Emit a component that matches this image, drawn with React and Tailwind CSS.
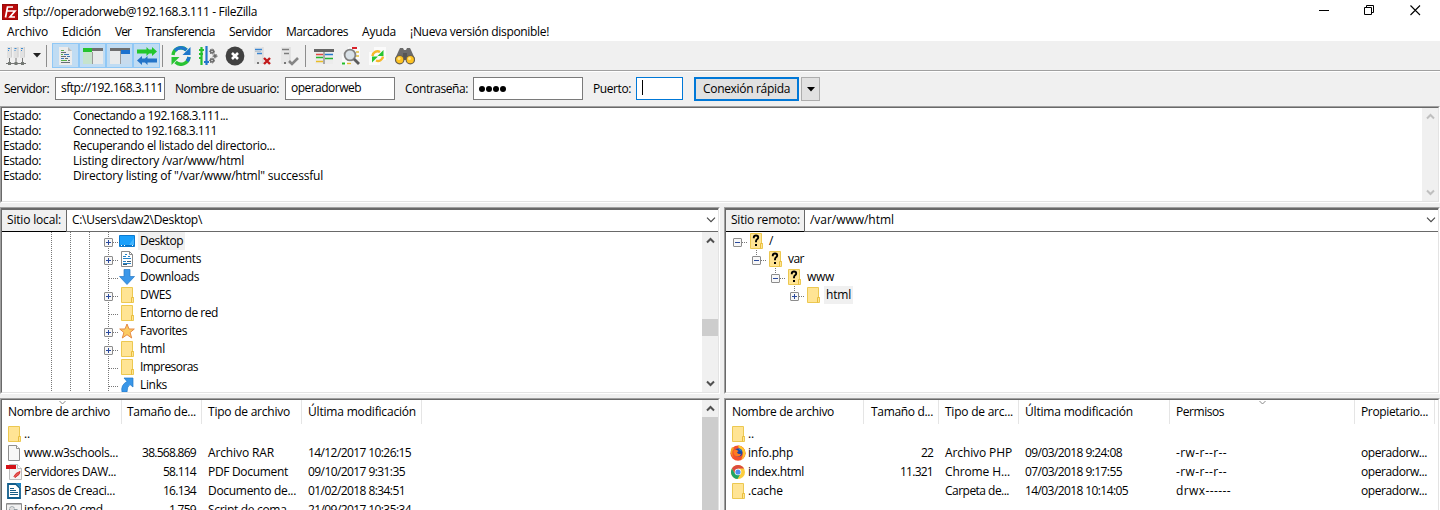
import { useLayoutEffect, useRef } from "react";

/* Text run whose tracking is adjusted so that it takes up `w` pixels. */
function T({ w, children, className = "" }) {
  const ref = useRef(null);
  useLayoutEffect(() => {
    const el = ref.current;
    el.style.letterSpacing = "0px";
    const natural = el.getBoundingClientRect().width;
    el.style.letterSpacing = (w - natural) / children.length + "px";
  }, [w, children]);
  return (
    <span ref={ref} className={"inline-block shrink-0 whitespace-pre " + className}>
      {children}
    </span>
  );
}

const Svg = ({ w = 20, h = 20, children, className = "" }) => (
  <svg width={w} height={h} viewBox={`0 0 ${w} ${h}`} className={"block shrink-0 " + className}>
    {children}
  </svg>
);

/* ---------- file and tree icons (16x16) ---------- */
const FolderIcon = ({ unknown }) => (
  <Svg w={16} h={16}>
    <path d="M2.500.5h11v10h1v5h-12z" fill="#ffe494" stroke="#ecc851" />
    <path d="M12.500 15.500v-5h2" fill="none" stroke="#e8bd3c" />
    {unknown && (
      <>
        <path d="M5.800 5.200V4.200Q5.800 2.500 8 2.500t2.200 1.900q0 1.200-1.100 1.900T8 8.500v.8" fill="none" stroke="#000" strokeWidth="1.900" />
        <path d="M7 11h2v2H7z" />
      </>
    )}
  </Svg>
);
const DesktopIcon = () => (
  <Svg w={16} h={16}>
    <path d="M.5 2.500h15v11H.5z" fill="#1aa0fb" stroke="#0b7ad0" />
    <path d="M10 12 15 5v7z" fill="#41b5ff" />
    <path d="M1 12.500h14" stroke="#0873c5" />
    <path d="M2 12.500h1m2 0h1m7 0h1" stroke="#fff" />
  </Svg>
);
const DocumentsIcon = () => (
  <Svg w={16} h={16}>
    <path d="M2.500.5h8l3 3v12h-11z" fill="#fff" stroke="#8b8b8b" />
    <path d="M10.500.5v3h3" fill="none" stroke="#8b8b8b" />
    <path d="M6 3.500h2M4 5.500h3M9 5.500h2M4 7.500h8M4 10.500h3M4 12.500h8" stroke="#2382c8" />
    <path d="M8 10h4v1H8zM4 13h4v1H4z" fill="#38596f" />
  </Svg>
);
const DownloadsIcon = () => (
  <Svg w={16} h={16}>
    <path d="M5 .5h6v7h4.500L8 15.500.5 7.500H5z" fill="#3b97e9" stroke="#2478c5" strokeWidth=".7" />
  </Svg>
);
const StarIcon = () => (
  <Svg w={16} h={16}>
    <path d="m8 1 2 5h5.300l-4.200 3.500 1.600 5.500L8 11.700 3.300 15l1.600-5.500L.7 6H6z" fill="#fbcb62" stroke="#e58a45" />
  </Svg>
);
const LinksIcon = () => (
  <Svg w={16} h={16}>
    <path d="M5 1h9v9l-3-2.500Q8 9.500 8 15H3Q1.500 8 8 4.500z" fill="#3996e8" stroke="#2079c9" strokeWidth=".7" />
  </Svg>
);
const BlankIcon = () => (
  <Svg w={16} h={16}>
    <path d="M2.500.5h8l3 3v12h-11z" fill="#f7f7f7" stroke="#8f8f8f" />
    <path d="M10.500.5v3h3" fill="#fff" stroke="#8f8f8f" />
  </Svg>
);
const PdfIcon = () => (
  <Svg w={16} h={16}>
    <path d="M3.500.5h8l4 4v11h-12z" fill="#f3f3f3" stroke="#bdbdbd" />
    <path d="M11.500.5v4h4" fill="#fff" stroke="#bdbdbd" />
    <path d="M0 1h10v4H0z" fill="#d31217" />
    <path d="m8 12.500 2-3 4-2-1 3-4 3z" fill="#e45a55" stroke="#d8302f" />
  </Svg>
);
const WriterIcon = () => (
  <Svg w={16} h={16}>
    <path d="M2 1h8l4 4v10H2z" fill="#fff" stroke="#125e8c" strokeWidth="1.800" />
    <path d="M10 0h5v5z" fill="#1c83c0" />
    <path d="M4 5.500h4M4 7.500h6M4 9.500h8M4 11.500h8" stroke="#185d86" />
  </Svg>
);
const CmdIcon = () => (
  <Svg w={16} h={16}>
    <path d="M.5 1.500h15v14H.5z" fill="#f1f1f1" stroke="#8b8b8b" />
    <path d="M1 2.500h14" stroke="#bbb" />
    <circle cx="6" cy="7" r="2.500" fill="#ddd" stroke="#849097" strokeDasharray="2 1" />
    <circle cx="10" cy="10" r="2.500" fill="#ddd" stroke="#849097" />
  </Svg>
);
const FirefoxIcon = () => (
  <Svg w={16} h={16}>
    <circle cx="8" cy="8.200" r="7.600" fill="#f4502c" />
    <path d="M8 0q7 2 7.500 8-.5 5-4.500 7Q15 9 10.500 4 8 3 8 0" fill="#ffc62c" />
    <path d="M1 4.500 2 2l2 1.500Q.5 8 4 13 0 10 1 4.500" fill="#f2a321" />
    <circle cx="8.400" cy="7.500" r="4" fill="#1748a8" />
    <path d="M8 3q3 .5 4 3.500L9.500 5z" fill="#2d99db" />
    <path d="M3.500 5.500 6 4.500 8.500 6 7 7.500q1.500 2.500 4.500 1-2 4-6 2.500Q3 9 3.500 5.500" fill="#ff7a22" />
  </Svg>
);
const ChromeIcon = () => (
  <Svg w={16} h={16}>
    <circle cx="8" cy="8" r="7" fill="#fccd3d" />
    <path d="M5 9.700 1.900 4.500A7 7 0 0 1 14.100 4.500H8z" fill="#dc4b3e" />
    <path d="M1.900 4.500A7 7 0 0 0 7.500 15l3-5.200H5z" fill="#21a567" />
    <circle cx="8" cy="8" r="3.300" fill="#fff" />
    <circle cx="8" cy="8" r="2.600" fill="#4f8df0" />
  </Svg>
);

/* ---------- toolbar icons ---------- */
const SiteManagerIcon = () => (
  <Svg>
    <path d="M1 1h5v11H1zM7.500 1h5v11h-5zM14 1h5v11h-5z" fill="#e1e1e1" />
    <path d="M2 2.500h2m4.500 0h2m4.500 0h2M2 4.500h1m5.500 0h1m5.500 0h1" stroke="#3d8bd1" />
    <path d="M5.500 1v10M12 1v10M18.500 1v10" stroke="#cfcfcf" />
    <path d="M3.500 12v4M10 12v4M16.500 12v4M0 17.500h20" stroke="#777" />
    <path d="M2 16h3v3H2zM8.500 16h3v3h-3zM15 16h3v3h-3z" fill="#747974" />
  </Svg>
);
const LogIcon = () => (
  <Svg>
    <path d="M3 1h9l4 4v14H3z" fill="#ececec" />
    <path d="m12 1 4 4h-4z" fill="#bbb" />
    <path d="M5 4.500h3M5 8.500h2M5 14.500h6" stroke="#57af49" />
    <path d="M8 8.500h5M5 12.500h3M11 10.500h3" stroke="#3e79ba" />
    <path d="M5 6.500h5M5 10.500h5M9 12.500h3M5 16.500h9M12 14.500h2" stroke="#676e75" />
  </Svg>
);
const LocalTreeIcon = () => (
  <Svg>
    <path d="M0 2h20v16H0z" fill="#e8eaeb" />
    <path d="M0 2h20v3H0z" fill="#6e6e6e" />
    <path d="M0 2h9v4H0z" fill="#24c32d" />
    <path d="M0 6h9v12H0z" fill="#c6e3cc" />
    <path d="M9.500 6v12" stroke="#999" />
  </Svg>
);
const RemoteTreeIcon = () => (
  <Svg>
    <path d="M0 2h20v16H0z" fill="#e8eaeb" />
    <path d="M0 2h20v3H0z" fill="#6e6e6e" />
    <path d="M11 4h9v4h-9z" fill="#1b71ce" />
    <path d="M11 8h9v10h-9z" fill="#c7dbed" />
    <path d="M10.500 5v13" stroke="#999" />
  </Svg>
);
const QueueIcon = () => (
  <Svg>
    <path d="M0 3.500h9.500V1l2.500 2.500h3V1l5 4.500-5 4.500V7.500h-3L9.500 10V7.500H0z" fill="#23c62c" />
    <path d="M20 12.500h-9.500V10L8 12.500H5V10l-5 4.500L5 19v-2.500h3l2.500 2.500v-2.500H20z" fill="#2474c8" />
  </Svg>
);
const RefreshIcon = () => (
  <Svg>
    <path d="M2 9A8 8 0 0 1 15.500 4" fill="none" stroke="#29c433" strokeWidth="3.400" />
    <path d="M4 4.500A8 8 0 0 1 15.500 4" fill="none" stroke="#1e77cb" strokeWidth="3.400" />
    <path d="M19.500 1v8h-8z" fill="#1e77cb" />
    <path d="M18 11A8 8 0 0 1 4.500 16" fill="none" stroke="#29c433" strokeWidth="3.400" />
    <path d="M18 11A8 8 0 0 1 16 15.200" fill="none" stroke="#1e77cb" strokeWidth="3.400" />
    <path d="M.5 19v-8h8z" fill="#29c433" />
  </Svg>
);
const Gear = ({ x, y, r }) => (
  <>
    <circle cx={x} cy={y} r={r} fill="none" stroke="#686868" strokeWidth="1.500" />
    <circle cx={x} cy={y} r={r + 1} fill="none" stroke="#686868" strokeWidth="1" strokeDasharray="1.200 1.200" />
  </>
);
const ProcessIcon = () => (
  <Svg>
    <path d="M3.500 1v18M1 4h5M1 8h4M1 12h3" stroke="#26c12e" strokeWidth="2.200" />
    <path d="M8.500 0v19M6 16h5" stroke="#2376cc" strokeWidth="2.200" />
    <Gear x={14} y={5.500} r={1.500} />
    <Gear x={17} y={10} r={1} />
    <Gear x={14} y={14.500} r={1.500} />
  </Svg>
);
const CancelIcon = () => (
  <Svg>
    <circle cx="10" cy="10" r="9.400" fill="#414141" />
    <path d="m7 7 6 6m0-6-6 6" stroke="#fff" strokeWidth="2.600" />
  </Svg>
);
const DisconnectIcon = () => (
  <Svg>
    <path d="M2 1h9v17H2z" fill="#e7e7e7" />
    <path d="M11 1v17" stroke="#d3d3d3" />
    <path d="M3 3.500h7M5 7.500h5" stroke="#3a85d0" strokeWidth="1.500" />
    <path d="M3 5.500h6" stroke="#b9c5d0" />
    <path d="M5 16h2v2H5z" fill="#777" />
    <path d="m12 12 6 6m0-6-6 6" stroke="#c2191b" strokeWidth="2.400" />
  </Svg>
);
const ReconnectIcon = () => (
  <Svg>
    <path d="M2 1h9v17H2z" fill="#e7e7e7" />
    <path d="M11 1v17" stroke="#d3d3d3" />
    <path d="M3 3.500h7M5 7.500h5" stroke="#7c7c7c" strokeWidth="1.500" />
    <path d="M5 16h2v2H5z" fill="#777" />
    <path d="m10 15 3 3 6-6" fill="none" stroke="#858585" strokeWidth="2.600" />
  </Svg>
);
const FilterIcon = () => (
  <Svg>
    <path d="M1 4h18v14H1z" fill="#ececec" />
    <path d="M0 3h20v3H0z" fill="#666" />
    <path d="M2 8.500h7" stroke="#e24a44" strokeWidth="1.500" />
    <path d="M2 11.500h7" stroke="#25b82d" strokeWidth="1.500" />
    <path d="M2 15.500h7" stroke="#e9bd27" strokeWidth="1.500" />
    <path d="M11 12.500h8" stroke="#24b331" strokeWidth="1.500" />
    <path d="M11 8.500h8" stroke="#2679cd" strokeWidth="1.500" />
    <path d="M10 5v13" stroke="#666" />
  </Svg>
);
const CompareIcon = () => (
  <Svg>
    <path d="M7 1h12v12H7zM1 8h9v11H1z" fill="#fafafa" />
    <path d="M11 2h5" stroke="#d9232b" strokeWidth="2" />
    <path d="M15 6h3M15 10h3" stroke="#e1bf3a" strokeWidth="1.500" />
    <path d="M1 17.500h3" stroke="#22bd2b" strokeWidth="2" />
    <path d="M6 17.500h4" stroke="#e4bb32" strokeWidth="1.500" />
    <circle cx="9" cy="9" r="5.400" fill="#d9e1e7" stroke="#818181" strokeWidth="1.800" />
    <path d="m13 13 5 5" stroke="#5b5b5b" strokeWidth="2.800" />
  </Svg>
);
const SyncIcon = () => (
  <Svg>
    <path d="M6 1h12v13H6zM1 6h11v13H1z" fill="#fbfbfb" />
    <path d="M4.500 10A5 5 0 0 1 12 6" fill="none" stroke="#f5b92b" strokeWidth="2.400" />
    <path d="M15.500 4v6H9.500z" fill="#28c532" />
    <path d="M15 10.500a5 5 0 0 1-7 4" fill="none" stroke="#f5b92b" strokeWidth="2.400" />
    <path d="M4 16.500v-6h6z" fill="#28c532" />
  </Svg>
);
const FindIcon = () => (
  <Svg>
    <path d="M4 4 5 2h3l1 2h2l1-2h3l1 2 4 9H0z" fill="#6b6b6b" />
    <path d="M8 7h4v7H8z" fill="#555" />
    <circle cx="4.700" cy="13.700" r="4.200" fill="#ffc321" stroke="#69604e" strokeWidth="1.200" />
    <circle cx="15.300" cy="13.700" r="4.200" fill="#ffc321" stroke="#69604e" strokeWidth="1.200" />
    <circle cx="4" cy="12.500" r="1.500" fill="#ffe58a" />
    <circle cx="14.500" cy="12.500" r="1.500" fill="#ffe58a" />
  </Svg>
);

const ToolButton = ({ children }) => (
  <div className="flex h-full w-[27px] items-center justify-center">{children}</div>
);
const Pressed = ({ children }) => (
  <div className="flex h-[25px] w-[27px] items-center justify-center border border-[#90c8f6] bg-[#c0dcf3]">{children}</div>
);
const Sep = () => <div className="h-[22px] w-px bg-[#8d8d8d]" />;

function TitleBar() {
  return (
    <div className="flex h-[23px] shrink-0 items-center pl-[2px]">
      <Svg w={16} h={17}>
        <path d="M0 1h16v16H0z" fill="#b80a0a" />
        <path d="M.5 1.500h15v15H.5z" fill="none" stroke="#7f0909" strokeDasharray="1 1" />
        <path d="M3.500 14.500 5.500 4H11M4.500 8h4.500M8.500 8H13l-5 6h5" fill="none" stroke="#fff" strokeWidth="1.700" />
      </Svg>
      <T w={234} className="ml-[5px]">sftp://operadorweb@192.168.3.111 - FileZilla</T>
      <div className="ml-auto flex h-full items-center pb-[2px] pr-[19px]">
        <Svg w={11} h={11} className="mr-[34px]"><path d="M0 5.500h10" stroke="#000" /></Svg>
        <Svg w={11} h={11} className="mr-[35px]"><path d="M.5 2.500h7v7h-7zM2.500 2V.5h7v7H8" fill="none" stroke="#000" /></Svg>
        <Svg w={11} h={11}><path d="m.5.5 9.500 9.500m0-9.500L.5 10" stroke="#000" strokeWidth="1.100" /></Svg>
      </div>
    </div>
  );
}

function MenuBar() {
  return (
    <div className="flex h-[18px] shrink-0 items-center pl-[7px]">
      <T w={41} className="mr-[14px]">Archivo</T>
      <T w={39} className="mr-[14px]">Edición</T>
      <T w={16} className="mr-[14px]">Ver</T>
      <T w={70} className="mr-[14px]">Transferencia</T>
      <T w={43} className="mr-[14px]">Servidor</T>
      <T w={62} className="mr-[14px]">Marcadores</T>
      <T w={34} className="mr-[14px]">Ayuda</T>
      <T w={139}>¡Nueva versión disponible!</T>
    </div>
  );
}

function ToolBar() {
  return (
    <div className="flex h-[29px] shrink-0 items-center bg-[#f0f0f0] pl-[6px]">
      <SiteManagerIcon />
      <Svg w={8} h={5} className="ml-[7px]"><path d="M0 0h8L4 4.500z" fill="#222" /></Svg>
      <div className="ml-[5px] mr-[5px]"><Sep /></div>
      <Pressed><LogIcon /></Pressed>
      <Pressed><LocalTreeIcon /></Pressed>
      <Pressed><RemoteTreeIcon /></Pressed>
      <Pressed><QueueIcon /></Pressed>
      <div className="ml-[2px] mr-[4px]"><Sep /></div>
      <ToolButton><RefreshIcon /></ToolButton>
      <ToolButton><ProcessIcon /></ToolButton>
      <ToolButton><CancelIcon /></ToolButton>
      <ToolButton><DisconnectIcon /></ToolButton>
      <ToolButton><ReconnectIcon /></ToolButton>
      <div className="ml-[3px] mr-[4px]"><Sep /></div>
      <ToolButton><FilterIcon /></ToolButton>
      <ToolButton><CompareIcon /></ToolButton>
      <ToolButton><SyncIcon /></ToolButton>
      <ToolButton><FindIcon /></ToolButton>
    </div>
  );
}

function QuickConnect() {
  const field = "flex h-[23px] items-center overflow-hidden border bg-white pl-[5px] ";
  return (
    <div className="flex h-[34px] shrink-0 items-start bg-[#f0f0f0] pl-1 pt-[5px]">
      <T w={45} className="mr-[6px] mt-[4px]">Servidor:</T>
      <div className={field + "w-[110px] border-[#7a7a7a] pb-px"}><T w={102}>sftp://192.168.3.111</T></div>
      <T w={104} className="ml-[10px] mr-[6px] mt-[4px]">Nombre de usuario:</T>
      <div className={field + "w-[110px] border-[#7a7a7a] pb-px"}><T w={70}>operadorweb</T></div>
      <T w={63} className="ml-[10px] mr-[5px] mt-[4px]">Contraseña:</T>
      <div className={field + "w-[110px] gap-px border-[#7a7a7a]"}>
        {[0, 1, 2, 3].map((i) => <div key={i} className="size-[6px] rounded-full bg-black" />)}
      </div>
      <T w={38} className="ml-[10px] mr-[5px] mt-[4px]">Puerto:</T>
      <div className={field + "w-[47px] border-[#0078d7]"}><div className="mb-[2px] h-[15px] w-px bg-black" /></div>
      <div className="ml-[11px] flex h-[24px] w-[105px] items-center border-2 border-[#0078d7] bg-[#e1e1e1] pl-[7px]">
        <T w={87}>Conexión rápida</T>
      </div>
      <div className="ml-[2px] flex h-[24px] w-[19px] items-center justify-center border border-[#adadad] bg-[#e1e1e1]">
        <Svg w={8} h={5}><path d="M0 0h8L4 4.500z" /></Svg>
      </div>
    </div>
  );
}

/* Sunken window edge: two dark lines top/left, two light lines bottom/right. */
const Sunken = ({ className = "", children }) => (
  <div className={"flex shrink-0 border border-b-white border-l-[#a0a0a0] border-r-white border-t-[#a0a0a0] " + className}>
    <div className="flex min-w-0 flex-1 flex-col border border-b-[#e3e3e3] border-l-[#696969] border-r-[#e3e3e3] border-t-[#696969] bg-white">
      {children}
    </div>
  </div>
);

const Chevron = ({ up, color = "#505050", className = "" }) => (
  <Svg w={9} h={7} className={className}>
    <path d={up ? "M1 5.500 4.500 2 8 5.500" : "M1 1.500 4.500 5 8 1.500"} fill="none" stroke={color} strokeWidth="2" />
  </Svg>
);

const LOG = [
  ["Conectando a 192.168.3.111...", 155],
  ["Connected to 192.168.3.111", 144],
  ["Recuperando el listado del directorio...", 202],
  ["Listing directory /var/www/html", 171],
  ['Directory listing of "/var/www/html" successful', 250],
];

function LogPane() {
  return (
    <Sunken className="h-[97px]">
      <div className="flex min-h-0 flex-1">
        <div className="flex-1 pl-px">
          {LOG.map(([text, w]) => (
            <div key={text} className="flex h-[15px] items-center">
              <div className="w-[70px]"><T w={38}>Estado:</T></div>
              <T w={w}>{text}</T>
            </div>
          ))}
        </div>
        <div className="flex w-4 flex-col items-center justify-between bg-[#f0f0f0] py-[5px]">
          <Chevron up color="#bfbfbf" />
          <Chevron color="#bfbfbf" />
        </div>
      </div>
    </Sunken>
  );
}

function Address({ label, labelW, path, pathW, boxClass }) {
  return (
    <div className="flex h-[23px] shrink-0 border-t border-[#696969]">
      <div className={"flex items-center border-b border-black bg-[#f0f0f0] pb-px pl-[5px] " + boxClass}>
        <T w={labelW}>{label}</T>
      </div>
      <div className="flex flex-1 items-center justify-between border-b border-l border-[#696969] pb-px pl-[5px] pr-[2px]">
        <T w={pathW}>{path}</T>
        <Svg w={10} h={6}><path d="m1 .7 4 4 4-4" fill="none" stroke="#444" strokeWidth="1.100" /></Svg>
      </div>
    </div>
  );
}

const Expander = ({ x, open }) => (
  <>
    <rect x={x + 0.500} y="6.500" width="8" height="8" rx=".5" fill="#f7f7f7" stroke="#8c8c8c" />
    <path d={`M${x + 2} 10.500h5${open ? "" : `M${x + 4.500} 8v5`}`} stroke="#2b4a9d" />
  </>
);

const LOCAL = [
  ["Desktop", 43, DesktopIcon, true, true],
  ["Documents", 61, DocumentsIcon, true],
  ["Downloads", 59, DownloadsIcon, false],
  ["DWES", 31, FolderIcon, true],
  ["Entorno de red", 78, FolderIcon, false],
  ["Favorites", 47, StarIcon, true],
  ["html", 25, FolderIcon, true],
  ["Impresoras", 58, FolderIcon, false],
  ["Links", 27, LinksIcon, false],
];

function LocalTree() {
  return (
    <div className="flex min-h-0 flex-1">
      <div className="flex-1 overflow-hidden">
        {LOCAL.map(([name, w, Icon, plus, selected]) => (
          <div key={name} className="flex h-[18px] items-center pl-[49px]">
            <Svg w={68} h={18}>
              <path d="M.5 0v18M19.500 0v18M38.500 0v18M57.500 0v18M58 10.500h10" fill="none" stroke="#777" strokeDasharray="1 1" />
              {plus && <Expander x={53} />}
            </Svg>
            <Icon />
            <div className={"ml-[3px] flex h-[18px] items-center px-[2px] " + (selected ? "bg-[#f0f0f0]" : "")}>
              <T w={w}>{name}</T>
            </div>
          </div>
        ))}
      </div>
      <div className="flex w-4 flex-col items-center bg-[#f0f0f0] py-[5px]">
        <Chevron up />
        <div className="mb-auto mt-[75px] h-[17px] w-full bg-[#cdcdcd]" />
        <Chevron />
      </div>
    </div>
  );
}

function RemoteTree() {
  return (
    <div className="min-h-0 flex-1 pl-[7px]">
      <div className="flex h-[18px] items-center">
        <Svg w={15} h={18}><path d="M9 10.500h6" stroke="#777" strokeDasharray="1 1" /><Expander x={0} open /></Svg>
        <FolderIcon unknown />
        <T w={5} className="ml-[5px]">/</T>
      </div>
      <div className="flex h-[18px] items-center pl-[19px]">
        <Svg w={15} h={18}><path d="M9 10.500h6M4.500 0v6" stroke="#777" strokeDasharray="1 1" /><Expander x={0} open /></Svg>
        <FolderIcon unknown />
        <T w={16} className="ml-[5px]">var</T>
      </div>
      <div className="flex h-[18px] items-center pl-[38px]">
        <Svg w={15} h={18}><path d="M9 10.500h6M4.500 0v6" stroke="#777" strokeDasharray="1 1" /><Expander x={0} open /></Svg>
        <FolderIcon unknown />
        <T w={27} className="ml-[5px]">www</T>
      </div>
      <div className="flex h-[18px] items-center pl-[57px]">
        <Svg w={15} h={18}><path d="M9 10.500h6M4.500 0v6" stroke="#777" strokeDasharray="1 1" /><Expander x={0} /></Svg>
        <FolderIcon />
        <div className="ml-[3px] flex h-[18px] items-center bg-[#f0f0f0] px-[2px]"><T w={25}>html</T></div>
      </div>
    </div>
  );
}

/* Each cell is [text, width]; the second column is right-aligned. */
const LOCAL_HEAD = [["Nombre de archivo", 102], ["Tamaño de...", 69], ["Tipo de archivo", 82], ["Última modificación", 108]];
const LOCAL_ROWS = [
  [FolderIcon, ["..", 6]],
  [BlankIcon, ["www.w3schools...", 94], ["38.568.869", 54], ["Archivo RAR", 66], ["14/12/2017 10:26:15", 103]],
  [PdfIcon, ["Servidores DAW...", 92], ["58.114", 33], ["PDF Document", 80], ["09/10/2017 9:31:35", 97]],
  [WriterIcon, ["Pasos de Creaci...", 91], ["16.134", 33], ["Documento de...", 88], ["01/02/2018 8:34:51", 97]],
  [CmdIcon, ["infopcy20.cmd", 79], ["1.759", 27], ["Script de coma...", 87], ["21/09/2017 10:35:34", 103]],
];
const REMOTE_HEAD = [["Nombre de archivo", 102], ["Tamaño d...", 62], ["Tipo de arc...", 68], ["Última modificación", 108], ["Permisos", 48], ["Propietario...", 67]];
const REMOTE_ROWS = [
  [FolderIcon, ["..", 6]],
  [FirefoxIcon, ["info.php", 45], ["22", 12], ["Archivo PHP", 67], ["09/03/2018 9:24:08", 97], ["-rw-r--r--", 51], ["operadorw...", 66]],
  [ChromeIcon, ["index.html", 56], ["11.321", 33], ["Chrome H...", 65], ["07/03/2018 9:17:55", 97], ["-rw-r--r--", 51], ["operadorw...", 66]],
  [FolderIcon, [".cache", 35], ["", 0], ["Carpeta de...", 64], ["14/03/2018 10:14:05", 103], ["drwx------", 55], ["operadorw...", 66]],
];

function FileList({ head, rows, cols, sorted }) {
  return (
    <div className="min-w-0 flex-1 overflow-hidden">
      <div className={"grid h-6 " + cols}>
        {head.map(([text, w], i) => (
          <div key={i} className={"relative flex items-center border-r border-[#e5e5e5] " + (i === 1 ? "justify-end pr-[5px]" : "pl-[6px]")}>
            <T w={w}>{text}</T>
            {i === sorted && (
              <Svg w={7} h={4} className="absolute left-1/2 top-px -ml-[3px]"><path d="m.5 0 3 3 3-3" fill="none" stroke="#888" /></Svg>
            )}
          </div>
        ))}
      </div>
      {rows.map(([Icon, ...cells], r) => (
        <div key={r} className={"grid h-[19px] " + cols}>
          {cells.map(([text, w], i) => (
            <div key={i} className={"flex items-center " + (i === 1 ? "justify-end pr-[6px]" : i === 0 ? "pl-[4px]" : "pl-[6px]")}>
              {i === 0 && <div className="mr-[2px]"><Icon /></div>}
              {text && <T w={w}>{text}</T>}
            </div>
          ))}
        </div>
      ))}
    </div>
  );
}

export default function App() {
  return (
    <div className="flex h-[510px] w-[1440px] flex-col overflow-hidden bg-white font-['Open_Sans',sans-serif] text-[12px] leading-[16px] text-black">
      <TitleBar />
      <MenuBar />
      <ToolBar />
      <div className="h-[2px] shrink-0 border-b border-t border-b-white border-t-[#a0a0a0]" />
      <QuickConnect />
      <LogPane />
      <div className="grid h-[307px] shrink-0 grid-cols-[720px_716px] gap-x-1 overflow-hidden bg-[#f0f0f0] pt-1">
        <div className="flex flex-col gap-1">
          <Sunken className="h-[187px]">
            <Address label="Sitio local:" labelW={54} path="C:\Users\daw2\Desktop\" pathW={130} boxClass="w-16" />
            <LocalTree />
          </Sunken>
          <Sunken className="h-[200px]">
            <div className="flex h-full">
              <FileList head={LOCAL_HEAD} rows={LOCAL_ROWS} cols="grid-cols-[120px_80px_100px_120px]" sorted={0} />
              <div className="flex w-4 flex-col items-center bg-[#f0f0f0] pt-[5px]">
                <Chevron up />
                <div className="mt-[5px] w-full flex-1 bg-[#cdcdcd]" />
              </div>
            </div>
          </Sunken>
        </div>
        <div className="flex flex-col gap-1">
          <Sunken className="h-[187px]">
            <Address label="Sitio remoto:" labelW={69} path="/var/www/html" pathW={84} boxClass="w-[78px]" />
            <RemoteTree />
          </Sunken>
          <Sunken className="h-[200px]">
            <FileList head={REMOTE_HEAD} rows={REMOTE_ROWS} cols="grid-cols-[138px_75px_80px_151px_185px_80px]" sorted={4} />
          </Sunken>
        </div>
      </div>
    </div>
  );
}
